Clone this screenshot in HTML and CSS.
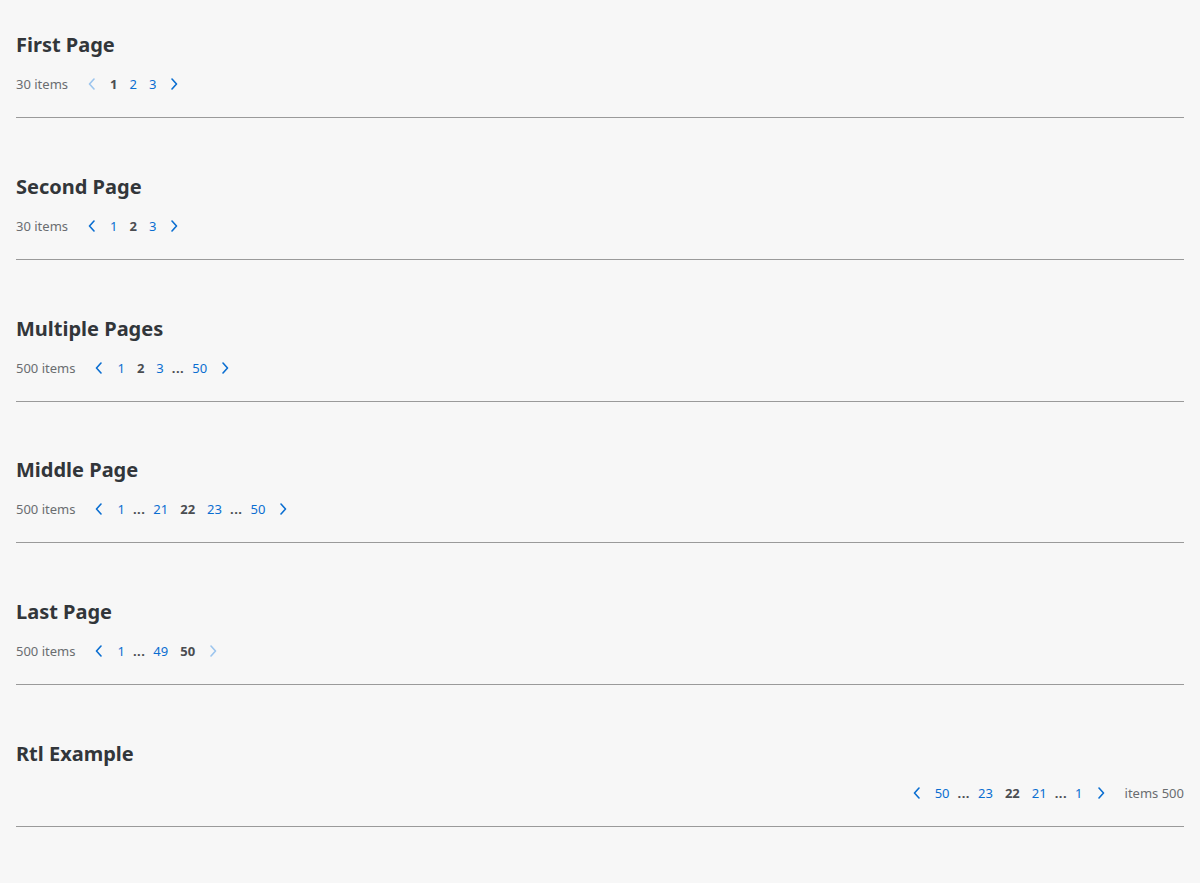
FILE: index.html
```html
<!DOCTYPE html>
<html lang="en">
<head>
<meta charset="utf-8">
<title>Pagination</title>
<link rel="stylesheet" href="styles.css">
</head>
<body>
<main class="page">
  <section class="example">
    <h2 class="title">First Page</h2>
    <nav class="pagination">
      <span class="total">30 items</span>
      <a class="arrow disabled"><svg viewBox="0 0 8 12" class="chev"><path d="M6 1 L1.5 6 L6 11"/></svg></a>
      <span class="link current">1</span>
      <a class="link">2</a>
      <a class="link">3</a>
      <a class="arrow"><svg viewBox="0 0 8 12" class="chev"><path d="M2 1 L6.5 6 L2 11"/></svg></a>
    </nav>
    <hr class="rule">
  </section>

  <section class="example">
    <h2 class="title">Second Page</h2>
    <nav class="pagination">
      <span class="total">30 items</span>
      <a class="arrow"><svg viewBox="0 0 8 12" class="chev"><path d="M6 1 L1.5 6 L6 11"/></svg></a>
      <a class="link">1</a>
      <span class="link current">2</span>
      <a class="link">3</a>
      <a class="arrow"><svg viewBox="0 0 8 12" class="chev"><path d="M2 1 L6.5 6 L2 11"/></svg></a>
    </nav>
    <hr class="rule">
  </section>

  <section class="example">
    <h2 class="title">Multiple Pages</h2>
    <nav class="pagination">
      <span class="total">500 items</span>
      <a class="arrow"><svg viewBox="0 0 8 12" class="chev"><path d="M6 1 L1.5 6 L6 11"/></svg></a>
      <a class="link">1</a>
      <span class="link current">2</span>
      <a class="link">3</a>
      <span class="more">...</span>
      <a class="link">50</a>
      <a class="arrow"><svg viewBox="0 0 8 12" class="chev"><path d="M2 1 L6.5 6 L2 11"/></svg></a>
    </nav>
    <hr class="rule">
  </section>

  <section class="example">
    <h2 class="title">Middle Page</h2>
    <nav class="pagination">
      <span class="total">500 items</span>
      <a class="arrow"><svg viewBox="0 0 8 12" class="chev"><path d="M6 1 L1.5 6 L6 11"/></svg></a>
      <a class="link">1</a>
      <span class="more">...</span>
      <a class="link">21</a>
      <span class="link current">22</span>
      <a class="link">23</a>
      <span class="more">...</span>
      <a class="link">50</a>
      <a class="arrow"><svg viewBox="0 0 8 12" class="chev"><path d="M2 1 L6.5 6 L2 11"/></svg></a>
    </nav>
    <hr class="rule">
  </section>

  <section class="example">
    <h2 class="title">Last Page</h2>
    <nav class="pagination">
      <span class="total">500 items</span>
      <a class="arrow"><svg viewBox="0 0 8 12" class="chev"><path d="M6 1 L1.5 6 L6 11"/></svg></a>
      <a class="link">1</a>
      <span class="more">...</span>
      <a class="link">49</a>
      <span class="link current">50</span>
      <a class="arrow disabled"><svg viewBox="0 0 8 12" class="chev"><path d="M2 1 L6.5 6 L2 11"/></svg></a>
    </nav>
    <hr class="rule">
  </section>

  <section class="example">
    <h2 class="title">Rtl Example</h2>
    <nav class="pagination" dir="rtl">
      <span class="total">500 items</span>
      <a class="arrow"><svg viewBox="0 0 8 12" class="chev"><path d="M2 1 L6.5 6 L2 11"/></svg></a>
      <a class="link">1</a>
      <span class="more">...</span>
      <a class="link">21</a>
      <span class="link current">22</span>
      <a class="link">23</a>
      <span class="more">...</span>
      <a class="link">50</a>
      <a class="arrow"><svg viewBox="0 0 8 12" class="chev"><path d="M6 1 L1.5 6 L6 11"/></svg></a>
    </nav>
    <hr class="rule">
  </section>
</main>
</body>
</html>
```

FILE: styles.css
```css
html, body {
  margin: 0;
  padding: 0;
  background: #f7f7f7;
}

body {
  font-family: "Noto Sans", "Open Sans", sans-serif;
  color: #32363a;
}

.page {
  padding: 33px 16px 40px;
  display: flex;
  flex-direction: column;
  gap: 56.8px;
}

.example {
  display: flex;
  flex-direction: column;
}

.title {
  margin: 0;
  font-size: 20px;
  line-height: 24px;
  font-weight: 700;
  color: #32363a;
}

.pagination {
  margin-top: 15px;
  height: 24px;
  display: flex;
  align-items: center;
  font-size: 13px;
  line-height: 24px;
}

.total {
  color: #6a6d70;
  margin-inline-end: 12px;
}

.arrow {
  width: 24px;
  height: 24px;
  display: flex;
  align-items: center;
  justify-content: center;
  cursor: pointer;
}

.chev {
  width: 8px;
  height: 12px;
  fill: none;
  stroke: #0a6ed1;
  stroke-width: 1.6;
  stroke-linecap: round;
  stroke-linejoin: round;
}

.arrow.disabled .chev {
  stroke: #9cc5ee;
}

.link {
  padding: 0 6px;
  color: #0a6ed1;
  cursor: pointer;
}

.link.current {
  color: #4a4d51;
  font-weight: 700;
  cursor: default;
}

.more {
  padding: 0 2px;
  color: #4a4d51;
  font-weight: 700;
  letter-spacing: 0.5px;
}

.rule {
  margin: 21px 0 0;
  border: 0;
  border-top: 1px solid #9a9a9a;
  height: 0;
}
```
